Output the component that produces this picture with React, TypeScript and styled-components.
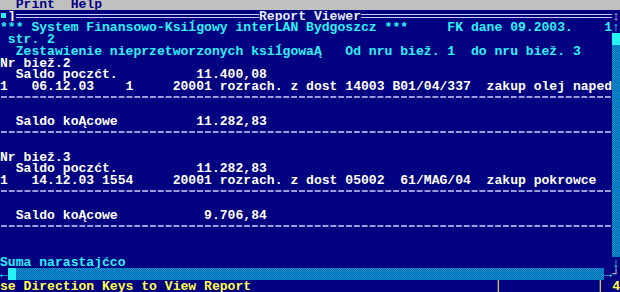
import styled, { createGlobalStyle } from 'styled-components';

const CELL_W = 7.848;
const ROW_H = 11.76;

const colors = {
  navy: '#000080',
  cyan: '#2cf2fa',
  white: '#ffffff',
  grey: '#c0c0c0',
  frame: '#c8c8ec',
  rule: '#9c9cdc',
  yellow: '#ffff48',
  thumb: '#24f6f6',
  ditherA: '#0a94d4',
  ditherB: '#0068b0',
};

const GlobalStyle = createGlobalStyle`
  html, body {
    margin: 0;
    padding: 0;
    background: ${colors.navy};
    overflow: hidden;
  }
`;

// 80x25 text screen, first column and top two pixels cropped off
const StyledScreen = styled('div')`
  width: 620px;
  height: 292px;
  display: grid;
  grid-template-columns: ${CELL_W * 78}px 1fr;
  grid-template-rows: 9.6px ${ROW_H}px ${ROW_H * 21}px ${ROW_H}px ${ROW_H}px;
  background: ${colors.navy};
  font-family: 'Liberation Mono', 'DejaVu Sans Mono', monospace;
  font-weight: bold;
  font-size: 13.08px;
  line-height: ${ROW_H + 2}px;
  white-space: pre;
  overflow: hidden;
`;

const StyledMenuBar = styled('div')`
  grid-column: 1 / -1;
  display: flex;
  align-items: flex-end;
  overflow: hidden;
  background: ${colors.grey};
  color: ${colors.navy};
`;

const StyledMenuText = styled('span')`
  height: ${ROW_H}px;
  flex-shrink: 0;
`;

const StyledTitleBar = styled('div')`
  grid-column: 1 / -1;
  display: flex;
  align-items: center;
  overflow: hidden;
  color: ${colors.white};
`;

const StyledCell = styled('span')<{ $color?: string }>`
  width: ${CELL_W}px;
  height: ${ROW_H}px;
  flex-shrink: 0;
  overflow: hidden;
  text-align: center;
  color: ${(p) => p.$color ?? 'inherit'};
`;

const StyledCloseBox = styled('span')`
  width: ${CELL_W}px;
  height: ${ROW_H}px;
  flex-shrink: 0;
  display: flex;
  align-items: center;
  justify-content: center;

  &::before {
    content: '';
    width: 5px;
    height: 5px;
    margin-top: 1px;
    margin-right: 1px;
    background: ${colors.cyan};
  }
`;

const StyledFrameLine = styled('span')<{ $cols?: number }>`
  height: 2px;
  margin-top: 1px;
  border-top: 1px solid ${colors.frame};
  border-bottom: 1px solid ${colors.frame};
  flex: ${(p) => (p.$cols ? `0 0 ${p.$cols * CELL_W}px` : '1')};
`;

const StyledTitle = styled('span')`
  height: ${ROW_H}px;
  color: #e4ecff;
`;

const StyledReport = styled('div')`
  display: flex;
  flex-direction: column;
`;

const StyledLine = styled('div')<{ $color?: string }>`
  height: ${ROW_H}px;
  color: ${(p) => p.$color ?? colors.white};
`;

const StyledRuleRow = styled('div')`
  height: ${ROW_H}px;
  display: flex;
  align-items: center;
`;

const StyledRule = styled('div')`
  width: ${CELL_W * 78}px;
  height: 2px;
  margin-top: -1px;
  background-image: linear-gradient(
    to right,
    transparent 0 1px,
    ${colors.rule} 1px 7px,
    transparent 7px
  );
  background-size: ${CELL_W}px 2px;
`;

const StyledVScroll = styled('div')`
  display: flex;
  flex-direction: column;
  color: ${colors.cyan};
`;

const StyledArrow = styled('span')`
  height: ${ROW_H}px;
  width: ${CELL_W}px;
  flex-shrink: 0;
  overflow: hidden;
  text-align: center;
`;

const StyledThumb = styled('span')`
  width: ${CELL_W}px;
  height: ${ROW_H}px;
  flex-shrink: 0;
  background: ${colors.thumb};
`;

const StyledTrack = styled('span')`
  flex: 1;
  background-color: ${colors.ditherB};
  background-image: conic-gradient(
    ${colors.ditherA} 90deg,
    transparent 90deg 180deg,
    ${colors.ditherA} 180deg 270deg,
    transparent 270deg
  );
  background-size: 2px 2px;
`;

const StyledHScroll = styled('div')`
  grid-column: 1 / -1;
  display: flex;
  color: ${colors.cyan};
`;

const StyledStatus = styled('div')`
  grid-column: 1 / -1;
  display: flex;
  overflow: hidden;
  color: ${colors.yellow};
`;

const StyledStatusField = styled('span')<{ $cols: number }>`
  width: ${(p) => p.$cols * CELL_W}px;
  height: ${ROW_H}px;
  flex-shrink: 0;
  overflow: hidden;
`;

type Row = { text?: string; color?: string; rule?: boolean };

const pad = (s: string, col: number) => s.padEnd(col, ' ');

const rows: Row[] = [
  {
    text:
      pad('*** System Finansowo-Ksiĺgowy interLAN Bydgoszcz ***', 57) +
      pad('FK dane 09.2003.', 20) +
      '1',
    color: colors.cyan,
  },
  { text: ' str. 2', color: colors.cyan },
  {
    text:
      pad('  Zestawienie nieprzetworzonych ksiĺgowaĄ', 44) +
      pad('Od nru biež. 1', 16) +
      'do nru biež. 3',
    color: colors.cyan,
  },
  { text: 'Nr biež.2' },
  { text: pad('  Saldo poczćt.', 25) + '11.400,08' },
  {
    text:
      '1   06.12.03    1     20001 rozrach. z dost 14003 B01/04/337  zakup olej naped',
  },
  { rule: true },
  {},
  { text: pad('  Saldo koĄcowe', 25) + '11.282,83' },
  { rule: true },
  {},
  { text: 'Nr biež.3' },
  { text: pad('  Saldo poczćt.', 25) + '11.282,83' },
  {
    text:
      '1   14.12.03 1554     20001 rozrach. z dost 05002  61/MAG/04  zakup pokrowce',
  },
  { rule: true },
  {},
  { text: pad('  Saldo koĄcowe', 26) + '9.706,84' },
  { rule: true },
  {},
  {},
  { text: 'Suma narastajćco', color: colors.cyan },
];

export default function App() {
  return (
    <>
      <GlobalStyle />
      <StyledScreen>
        <StyledMenuBar>
          <StyledMenuText>{'  Print  Help'}</StyledMenuText>
        </StyledMenuBar>

        <StyledTitleBar>
          <StyledCloseBox />
          <StyledCell>]</StyledCell>
          <StyledFrameLine $cols={31} />
          <StyledTitle>Report Viewer</StyledTitle>
          <StyledFrameLine />
          <StyledCell $color={colors.grey}>↕</StyledCell>
        </StyledTitleBar>

        <StyledReport>
          {rows.map((row, i) =>
            row.rule ? (
              <StyledRuleRow key={i}>
                <StyledRule />
              </StyledRuleRow>
            ) : (
              <StyledLine key={i} $color={row.color}>
                {row.text ?? ''}
              </StyledLine>
            ),
          )}
        </StyledReport>

        <StyledVScroll>
          <StyledArrow>↑</StyledArrow>
          <StyledThumb />
          <StyledTrack />
          <StyledArrow>↓</StyledArrow>
        </StyledVScroll>

        <StyledHScroll>
          <StyledArrow>←</StyledArrow>
          <StyledThumb />
          <StyledTrack />
          <StyledArrow>→</StyledArrow>
          <StyledCell $color={colors.grey}>┘</StyledCell>
        </StyledHScroll>

        <StyledStatus>
          <StyledStatusField $cols={63}>
            se Direction Keys to View Report
          </StyledStatusField>
          <StyledStatusField $cols={13}>│</StyledStatusField>
          <StyledStatusField $cols={2}>│</StyledStatusField>
          <StyledStatusField $cols={1}>4</StyledStatusField>
        </StyledStatus>
      </StyledScreen>
    </>
  );
}
